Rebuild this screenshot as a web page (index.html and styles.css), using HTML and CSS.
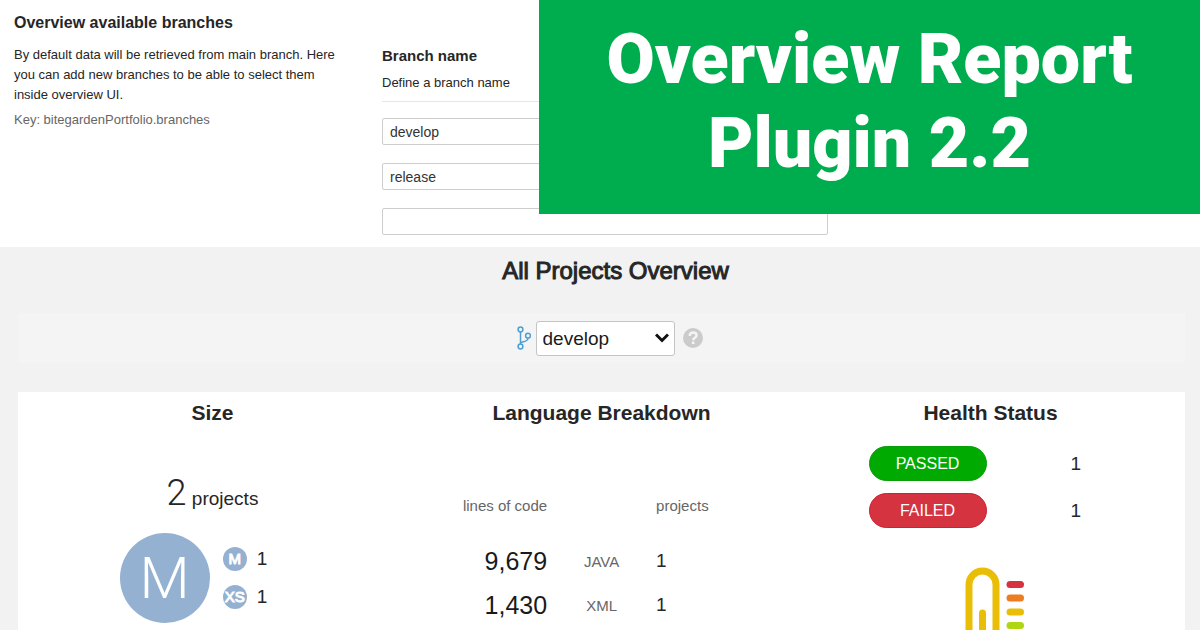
FILE: index.html
```html
<!DOCTYPE html>
<html lang="en">
<head>
<meta charset="utf-8">
<meta name="viewport" content="width=device-width, initial-scale=1">
<title>Overview Report Plugin 2.2</title>
<link rel="stylesheet" href="styles.css">
</head>
<body>
<header class="banner">
  <h1 class="banner-title">Overview Report<br>Plugin 2.2</h1>
</header>

<section class="settings">
  <div class="setting-info">
    <h2 class="setting-title">Overview available branches</h2>
    <p class="setting-text">By default data will be retrieved from main branch. Here you can add new branches to be able to select them inside overview UI.</p>
    <p class="setting-key">Key: bitegardenPortfolio.branches</p>
  </div>
  <form class="branches">
    <h3 class="branches-title" id="branch-name">Branch name</h3>
    <p class="branches-hint">Define a branch name</p>
    <div class="branches-fields">
      <input class="field" type="text" value="develop" aria-labelledby="branch-name">
      <input class="field" type="text" value="release" aria-labelledby="branch-name">
      <input class="field" type="text" value="" aria-labelledby="branch-name">
    </div>
  </form>
</section>

<main class="overview">
  <h2 class="overview-title">All Projects Overview</h2>
  <div class="toolbar">
    <label class="branch-label" for="branch" aria-label="Branch">
      <svg class="branch-icon" width="14" height="24" viewBox="0 0 14 24" fill="none" stroke="#4b9fd5" stroke-width="1.5">
        <circle cx="3.5" cy="3.5" r="2.4"/>
        <circle cx="3.5" cy="20.5" r="2.4"/>
        <circle cx="11" cy="9.7" r="2.4"/>
        <path d="M3.5 6v12M3.5 17.5C3.8 15.2 10.6 16.5 11 12.2"/>
      </svg>
    </label>
    <select class="branch-select" id="branch">
      <option selected>develop</option>
      <option>release</option>
    </select>
    <button class="help" type="button" aria-label="Help">
      <svg width="20" height="20" viewBox="0 0 20 20">
        <circle cx="10" cy="10" r="10" fill="#cbcbcb"/>
        <path d="M6.7 7.8C6.9 5.4 8.3 4.5 10.2 4.5C12 4.5 13.5 5.6 13.5 7.4C13.5 9.9 10.2 9.7 10.2 12.2" fill="none" stroke="#f4f4f4" stroke-width="2.5"/>
        <rect x="8.8" y="13.5" width="2.7" height="2.6" rx=".4" fill="#f4f4f4"/>
      </svg>
    </button>
  </div>

  <div class="card">
    <section class="column">
      <h3 class="column-title">Size</h3>
      <p class="total"><span class="total-number">2</span> projects</p>
      <div class="sizes">
        <span class="size-main">M</span>
        <ul class="size-list">
          <li class="size-item"><span class="size-badge">M</span>1</li>
          <li class="size-item"><span class="size-badge">XS</span>1</li>
        </ul>
      </div>
    </section>

    <section class="column">
      <h3 class="column-title">Language Breakdown</h3>
      <table class="languages">
        <thead>
          <tr><th class="lines">lines of code</th><td></td><th class="count">projects</th></tr>
        </thead>
        <tbody>
          <tr><td class="lines">9,679</td><td class="language">JAVA</td><td class="count">1</td></tr>
          <tr><td class="lines">1,430</td><td class="language">XML</td><td class="count">1</td></tr>
        </tbody>
      </table>
    </section>

    <section class="column">
      <h3 class="column-title">Health Status</h3>
      <ul class="statuses">
        <li class="status"><span class="pill pill-passed">PASSED</span><span class="status-count">1</span></li>
        <li class="status"><span class="pill pill-failed">FAILED</span><span class="status-count">1</span></li>
      </ul>
      <svg class="thermometer" width="72" height="63" viewBox="0 0 72 63" fill="none" stroke-width="7" stroke-linecap="round">
        <path d="M14 70V17.500a13.500 13.500 0 0 1 27 0V70" stroke="#eabe06"/>
        <path d="M27.500 46V76" stroke="#eabe06"/>
        <path d="M55 17.500h10.500" stroke="#d4333f"/>
        <path d="M55 31h10.500" stroke="#ed7d20"/>
        <path d="M55 45h10.500" stroke="#eabe06"/>
        <path d="M55 58.500h10.500" stroke="#b0d513"/>
      </svg>
    </section>
  </div>
</main>
</body>
</html>
```
FILE: styles.css
```css
* { box-sizing: border-box; }

body {
  margin: 0;
  min-height: 100vh;
  display: flex;
  flex-direction: column;
  position: relative;
  background: #fff;
  color: #262626;
  font-family: "Liberation Sans", Arial, sans-serif;
}

h1, h2, h3, p, ul { margin: 0; padding: 0; }
ul { list-style: none; }

/* Banner laid over the settings form */
.banner {
  position: absolute;
  top: 0;
  right: 0;
  left: 539px;
  z-index: 1;
  padding: 17px 0 29px;
  background: #00ad4e;
  color: #fff;
  text-align: center;
}
.banner-title {
  font: 900 70px/84px Roboto, sans-serif;
}

/* Settings */
.settings {
  display: grid;
  grid-template-columns: 340px 446px;
  gap: 28px;
  padding: 0 14px 12px;
}
.setting-info { padding: 12px 4px 0 0; }
.setting-title, .branches-title { font-size: 15px; line-height: 22px; }
.setting-title { font-size: 16px; }
.setting-text { margin-top: 11px; padding-right: 8px; font-size: 13px; line-height: 20px; }
.setting-key { margin-top: 5px; font-size: 13px; line-height: 20px; color: #666; }

.branches { padding-top: 45px; }
.branches-hint {
  padding: 6px 0 8px;
  border-bottom: 1px solid #e6e6e6;
  font-size: 13px;
  line-height: 20px;
}
.branches-fields { display: grid; gap: 18px; padding-top: 16px; }
.field {
  width: 100%;
  height: 27px;
  padding: 0 7px;
  border: 1px solid #cdcdcd;
  border-radius: 2px;
  background: #fff;
  color: #333;
  font: 14px "Liberation Sans", Arial, sans-serif;
}

/* Overview */
.overview {
  flex: 1;
  display: flex;
  flex-direction: column;
  padding: 10px 15px 0 18px;
  background: #f2f2f2;
}
.overview-title {
  padding-left: 28px;
  font-size: 24px;
  font-weight: 400;
  line-height: 28px;
  text-align: center;
  -webkit-text-stroke: 1px currentColor;
}
.toolbar {
  display: flex;
  align-items: center;
  justify-content: center;
  height: 50px;
  margin: 28px 0 29px;
  padding-left: 16px;
  background: #f4f4f4;
}
.branch-label { display: flex; margin-right: 5px; }
.branch-select {
  width: 139px;
  height: 35px;
  padding: 0 6px;
  border: 1px solid #c4c4c4;
  border-radius: 3px;
  appearance: none;
  background: #fff url("data:image/svg+xml,%3Csvg xmlns='http://www.w3.org/2000/svg' width='14' height='10' fill='none' stroke='%23111' stroke-width='3'%3E%3Cpath d='M1 1.500l6 6 6-6'/%3E%3C/svg%3E") no-repeat right 5px center;
  color: #1a1a1a;
  font: 19px "Liberation Sans", Arial, sans-serif;
}
.help {
  display: flex;
  margin-left: 8px;
  padding: 0;
  border: 0;
  background: none;
}

.card {
  flex: 1;
  display: grid;
  grid-template-columns: repeat(3, 1fr);
  background: #fff;
}
.column { display: flex; flex-direction: column; align-items: center; }
.column-title { padding-top: 8px; font-size: 21px; line-height: 26px; }

.total { padding-top: 46px; font-size: 19px; line-height: 42px; }
.total-number { font: 300 36px/42px Roboto, sans-serif; }

.sizes { display: flex; align-items: center; gap: 13px; padding-top: 13px; margin-right: 38px; }
.size-main {
  display: flex;
  align-items: center;
  justify-content: center;
  width: 90px;
  height: 90px;
  border-radius: 50%;
  background: #95b1d1;
  color: #fff;
  font: 300 58px/66px Roboto, sans-serif;
}
.size-list { display: grid; gap: 14px; }
.size-item { display: flex; align-items: center; gap: 10px; font-size: 19px; line-height: 24px; }
.size-badge {
  width: 24px;
  border-radius: 50%;
  background: #95b1d1;
  color: #fff;
  font-size: 15px;
  text-align: center;
  -webkit-text-stroke: 1px currentColor;
}

.languages { margin: 58px 26px 0 0; border-collapse: collapse; }
.languages th, .languages td { height: 44px; padding: 0; }
.languages thead th { height: 55px; padding-bottom: 12px; }
.languages th, .languages .language { font-size: 15px; font-weight: 400; color: #666; }
.lines { text-align: right; }
.languages td.lines { font-size: 25px; color: #1a1a1a; }
.language { width: 109px; text-align: center; }
.count { width: 58px; text-align: left; font-size: 19px; }

.statuses { display: grid; gap: 12px; padding-top: 20px; }
.status { display: grid; grid-template-columns: 118px 126px; align-items: center; }
.pill {
  border: 1px solid;
  border-radius: 18px;
  color: #fff;
  font-size: 16px;
  line-height: 33px;
  text-align: center;
}
.pill-passed { border-color: #0a9f0a; background: #00aa00; }
.pill-failed { border-color: #c92234; background: #d4333f; }
.status-count { padding-left: 84px; font-size: 19px; }
.thermometer { margin-top: 39px; }
```
